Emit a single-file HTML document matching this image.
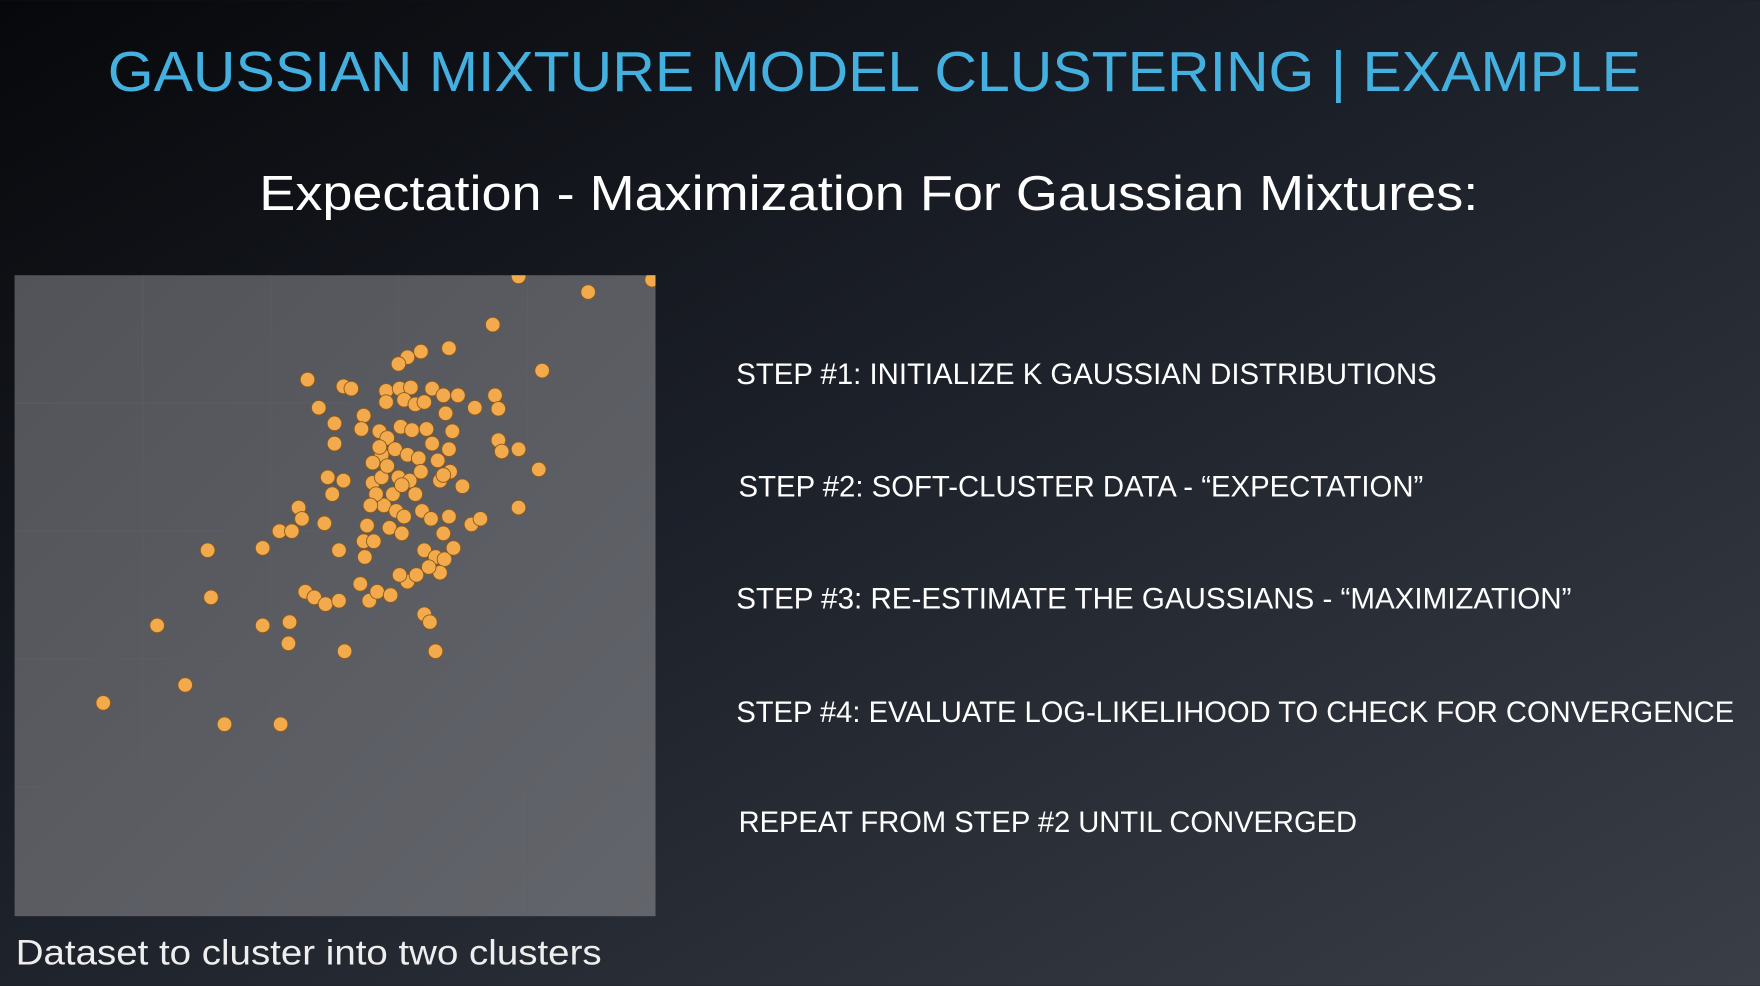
<!DOCTYPE html>
<html><head><meta charset="utf-8"><style>
html,body{margin:0;padding:0;width:1760px;height:986px;overflow:hidden;background:#15181e}
svg{display:block}
</style></head><body>
<svg width="1760" height="986" viewBox="0 0 1568 878" xmlns="http://www.w3.org/2000/svg">
<defs>
<linearGradient id="bg" x1="0" y1="0" x2="1" y2="1">
<stop offset="0" stop-color="#07080b"/><stop offset="0.45" stop-color="#1c2029"/><stop offset="1" stop-color="#3a3f47"/>
</linearGradient>
<linearGradient id="pl" x1="0" y1="0" x2="1" y2="1">
<stop offset="0" stop-color="#525359"/><stop offset="1" stop-color="#62656b"/>
</linearGradient>
</defs>
<rect width="1568" height="878" fill="url(#bg)"/>
<rect x="13" y="245" width="571" height="571" fill="url(#pl)"/>
<g stroke="#5d6066" stroke-width="1" opacity="0.6">
<line x1="127" y1="245" x2="127" y2="816"/><line x1="241" y1="245" x2="241" y2="816"/><line x1="355" y1="245" x2="355" y2="816"/><line x1="470" y1="245" x2="470" y2="816"/>
<line x1="13" y1="359" x2="584" y2="359"/><line x1="13" y1="473" x2="584" y2="473"/><line x1="13" y1="587" x2="584" y2="587"/><line x1="13" y1="701" x2="584" y2="701"/>
</g>
<svg x="13" y="245" width="571" height="571" viewBox="13 245 571 571">
<g fill="#f2aa4c" stroke="#8a5a1c" stroke-width="0.8">
<circle cx="462" cy="246" r="6.5"/><circle cx="524" cy="260" r="6.5"/><circle cx="581" cy="249" r="6.5"/><circle cx="439" cy="289" r="6.5"/><circle cx="400" cy="310" r="6.5"/><circle cx="375" cy="313" r="6.5"/><circle cx="363" cy="318" r="6.5"/><circle cx="355" cy="324" r="6.5"/><circle cx="483" cy="330" r="6.5"/><circle cx="274" cy="338" r="6.5"/><circle cx="306" cy="344" r="6.5"/><circle cx="313" cy="346" r="6.5"/><circle cx="344" cy="348" r="6.5"/><circle cx="356" cy="346" r="6.5"/><circle cx="366" cy="345" r="6.5"/><circle cx="385" cy="346" r="6.5"/><circle cx="395" cy="352" r="6.5"/><circle cx="408" cy="352" r="6.5"/><circle cx="441" cy="352" r="6.5"/><circle cx="444" cy="364" r="6.5"/><circle cx="284" cy="363" r="6.5"/><circle cx="298" cy="377" r="6.5"/><circle cx="324" cy="370" r="6.5"/><circle cx="322" cy="382" r="6.5"/><circle cx="344" cy="358" r="6.5"/><circle cx="360" cy="356" r="6.5"/><circle cx="370" cy="360" r="6.5"/><circle cx="378" cy="358" r="6.5"/><circle cx="397" cy="368" r="6.5"/><circle cx="423" cy="363" r="6.5"/><circle cx="403" cy="384" r="6.5"/><circle cx="338" cy="384" r="6.5"/><circle cx="345" cy="390" r="6.5"/><circle cx="357" cy="380" r="6.5"/><circle cx="367" cy="383" r="6.5"/><circle cx="380" cy="382" r="6.5"/><circle cx="298" cy="395" r="6.5"/><circle cx="400" cy="400" r="6.5"/><circle cx="340" cy="405" r="6.5"/><circle cx="352" cy="400" r="6.5"/><circle cx="363" cy="405" r="6.5"/><circle cx="373" cy="408" r="6.5"/><circle cx="444" cy="392" r="6.5"/><circle cx="447" cy="402" r="6.5"/><circle cx="462" cy="400" r="6.5"/><circle cx="480" cy="418" r="6.5"/><circle cx="292" cy="425" r="6.5"/><circle cx="306" cy="428" r="6.5"/><circle cx="296" cy="440" r="6.5"/><circle cx="332" cy="430" r="6.5"/><circle cx="340" cy="425" r="6.5"/><circle cx="355" cy="425" r="6.5"/><circle cx="370" cy="440" r="6.5"/><circle cx="392" cy="428" r="6.5"/><circle cx="412" cy="433" r="6.5"/><circle cx="401" cy="420" r="6.5"/><circle cx="342" cy="450" r="6.5"/><circle cx="353" cy="455" r="6.5"/><circle cx="360" cy="460" r="6.5"/><circle cx="376" cy="455" r="6.5"/><circle cx="384" cy="462" r="6.5"/><circle cx="266" cy="452" r="6.5"/><circle cx="269" cy="462" r="6.5"/><circle cx="249" cy="473" r="6.5"/><circle cx="260" cy="473" r="6.5"/><circle cx="289" cy="466" r="6.5"/><circle cx="327" cy="468" r="6.5"/><circle cx="347" cy="470" r="6.5"/><circle cx="358" cy="475" r="6.5"/><circle cx="400" cy="460" r="6.5"/><circle cx="395" cy="475" r="6.5"/><circle cx="420" cy="467" r="6.5"/><circle cx="428" cy="462" r="6.5"/><circle cx="462" cy="452" r="6.5"/><circle cx="185" cy="490" r="6.5"/><circle cx="234" cy="488" r="6.5"/><circle cx="302" cy="490" r="6.5"/><circle cx="324" cy="482" r="6.5"/><circle cx="333" cy="482" r="6.5"/><circle cx="325" cy="496" r="6.5"/><circle cx="378" cy="490" r="6.5"/><circle cx="388" cy="496" r="6.5"/><circle cx="396" cy="498" r="6.5"/><circle cx="404" cy="488" r="6.5"/><circle cx="392" cy="510" r="6.5"/><circle cx="382" cy="505" r="6.5"/><circle cx="363" cy="518" r="6.5"/><circle cx="371" cy="512" r="6.5"/><circle cx="356" cy="512" r="6.5"/><circle cx="321" cy="520" r="6.5"/><circle cx="272" cy="527" r="6.5"/><circle cx="280" cy="532" r="6.5"/><circle cx="290" cy="538" r="6.5"/><circle cx="302" cy="535" r="6.5"/><circle cx="329" cy="535" r="6.5"/><circle cx="336" cy="527" r="6.5"/><circle cx="348" cy="530" r="6.5"/><circle cx="188" cy="532" r="6.5"/><circle cx="140" cy="557" r="6.5"/><circle cx="234" cy="557" r="6.5"/><circle cx="258" cy="554" r="6.5"/><circle cx="257" cy="573" r="6.5"/><circle cx="307" cy="580" r="6.5"/><circle cx="378" cy="547" r="6.5"/><circle cx="383" cy="554" r="6.5"/><circle cx="388" cy="580" r="6.5"/><circle cx="165" cy="610" r="6.5"/><circle cx="92" cy="626" r="6.5"/><circle cx="200" cy="645" r="6.5"/><circle cx="250" cy="645" r="6.5"/><circle cx="335" cy="440" r="6.5"/><circle cx="330" cy="450" r="6.5"/><circle cx="350" cy="440" r="6.5"/><circle cx="365" cy="428" r="6.5"/><circle cx="375" cy="420" r="6.5"/><circle cx="345" cy="415" r="6.5"/><circle cx="338" cy="398" r="6.5"/><circle cx="385" cy="395" r="6.5"/><circle cx="390" cy="410" r="6.5"/><circle cx="395" cy="423" r="6.5"/><circle cx="358" cy="432" r="6.5"/><circle cx="332" cy="412" r="6.5"/>
</g>
</svg>
<g font-family="'Liberation Sans', sans-serif">
<text x="96" y="81" font-size="50" fill="#43b0e0" textLength="1366" lengthAdjust="spacingAndGlyphs">GAUSSIAN MIXTURE MODEL CLUSTERING | EXAMPLE</text>
<text x="231" y="187" font-size="44" fill="#ffffff" textLength="1086" lengthAdjust="spacingAndGlyphs">Expectation - Maximization For Gaussian Mixtures:</text>
<g font-size="26" fill="#ffffff">
<text x="656" y="342" textLength="624" lengthAdjust="spacingAndGlyphs">STEP #1: INITIALIZE K GAUSSIAN DISTRIBUTIONS</text>
<text x="658" y="442" textLength="610" lengthAdjust="spacingAndGlyphs">STEP #2: SOFT-CLUSTER DATA - “EXPECTATION”</text>
<text x="656" y="542" textLength="744" lengthAdjust="spacingAndGlyphs">STEP #3: RE-ESTIMATE THE GAUSSIANS - “MAXIMIZATION”</text>
<text x="656" y="643" textLength="889" lengthAdjust="spacingAndGlyphs">STEP #4: EVALUATE LOG-LIKELIHOOD TO CHECK FOR CONVERGENCE</text>
<text x="658" y="741" textLength="551" lengthAdjust="spacingAndGlyphs">REPEAT FROM STEP #2 UNTIL CONVERGED</text>
</g>
<text x="14" y="859" font-size="31" fill="#eeeeee" textLength="522" lengthAdjust="spacingAndGlyphs">Dataset to cluster into two clusters</text>
</g>
</svg>
</body></html>
